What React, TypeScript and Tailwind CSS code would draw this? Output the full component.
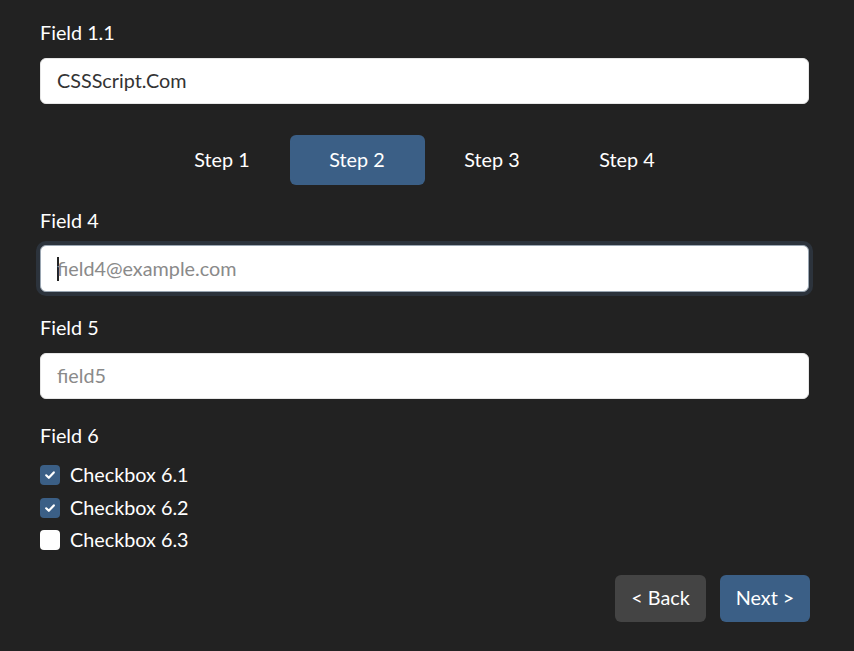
import React from 'react';

const Check = ({ checked }: { checked: boolean }) => (
  <span
    className={`flex h-5 w-5 items-center justify-center rounded-[4px] ${
      checked ? 'bg-[#3b5f86]' : 'bg-white'
    }`}
  >
    {checked && (
      <svg viewBox="0 0 12 12" className="h-3 w-3">
        <path d="M2.2 6.3 4.8 8.8 9.8 3.4" fill="none" stroke="#fff" strokeWidth="2.2" strokeLinecap="round" strokeLinejoin="round" />
      </svg>
    )}
  </span>
);

export default function App() {
  const steps = ['Step 1', 'Step 2', 'Step 3', 'Step 4'];
  const boxes = [
    { label: 'Checkbox 6.1', checked: true },
    { label: 'Checkbox 6.2', checked: true },
    { label: 'Checkbox 6.3', checked: false },
  ];

  return (
    <div className="min-h-[651px] bg-[#222222] px-10 pt-5 text-white" style={{ fontFamily: 'Lato, "Open Sans", sans-serif' }}>
      <div className="w-[769px]">
        <div className="mb-[14px] text-[19.8px] leading-6">Field 1.1</div>
        <div className="flex h-[46px] items-center rounded-md border border-[#e6e6e6] bg-white px-4 text-[19.8px] text-[#333]">
          CSSScript.Com
        </div>

        <div className="mt-[31px] flex justify-center">
          {steps.map((s, i) => (
            <div
              key={s}
              className={`flex h-[50px] w-[135px] items-center justify-center rounded-md text-[19.8px] ${
                i === 1 ? 'bg-[#3b5f86]' : ''
              }`}
            >
              {s}
            </div>
          ))}
        </div>

        <div className="mt-[23px] mb-[13px] text-[19.8px] leading-6">Field 4</div>
        <div className="flex h-[47px] items-center rounded-md border border-[#9aa6b2] bg-white px-4 text-[19.8px] text-[#8a8a8a] shadow-[0_0_0_4px_rgba(52,66,82,0.55)]">
          <span className="h-[24px] w-[2px] bg-[#222]" />
          <span className="-ml-[2px]">field4@example.com</span>
        </div>

        <div className="mt-[23px] mb-[14px] text-[19.8px] leading-6">Field 5</div>
        <div className="flex h-[46px] items-center rounded-md border border-[#e6e6e6] bg-white px-4 text-[19.8px] text-[#8a8a8a]">
          field5
        </div>

        <div className="mt-6 mb-3 text-[19.8px] leading-6">Field 6</div>
        <div className="flex flex-col">
          {boxes.map((b) => (
            <label key={b.label} className="flex h-[32.5px] items-center gap-[10px] text-[19.8px]">
              <Check checked={b.checked} />
              {b.label}
            </label>
          ))}
        </div>

        <div className="mt-[18px] flex justify-end gap-[14px]">
          <button className="h-[47px] w-[91px] rounded-md bg-[#444444] text-[19.8px] text-white">&lt; Back</button>
          <button className="-mr-px h-[47px] w-[90px] rounded-md bg-[#3b5f86] text-[19.8px] text-white">Next &gt;</button>
        </div>
      </div>
    </div>
  );
}
